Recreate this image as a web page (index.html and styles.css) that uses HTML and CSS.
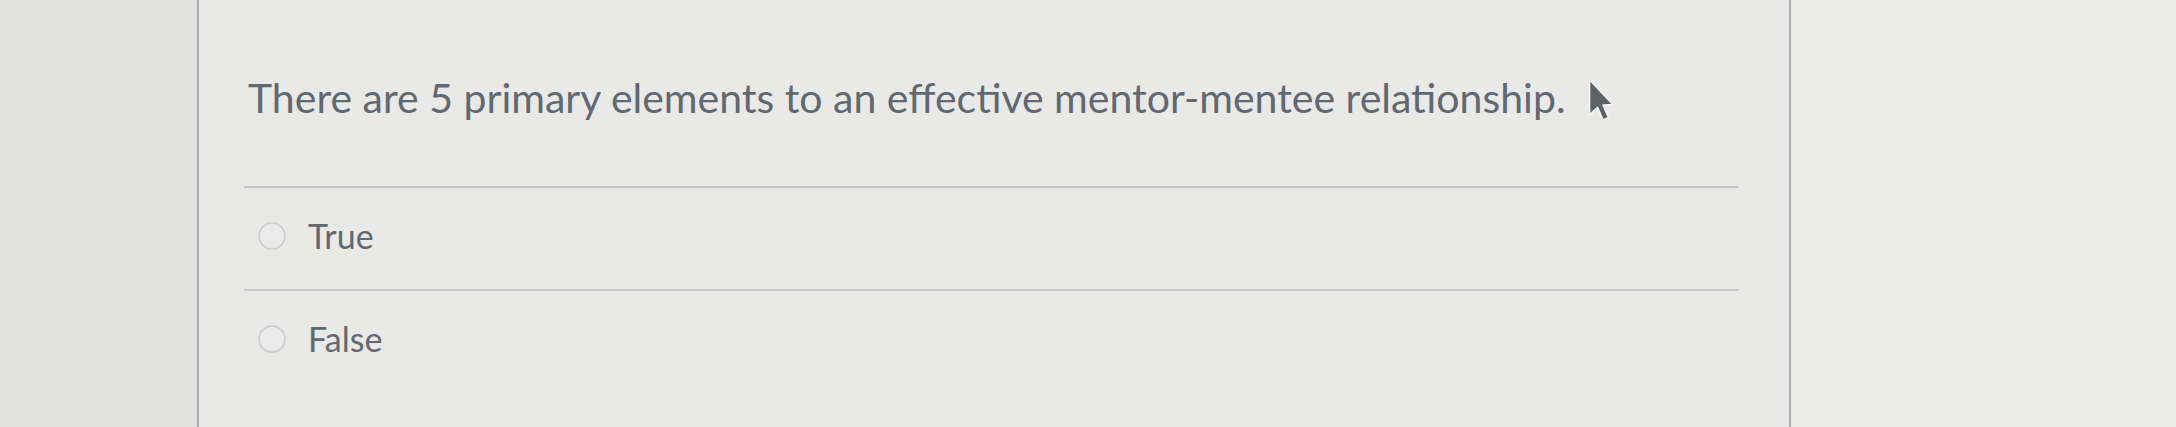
FILE: index.html
```html
<!DOCTYPE html>
<html lang="en">
<head>
  <meta charset="UTF-8">
  <meta name="viewport" content="width=device-width, initial-scale=1">
  <title>Quiz Question</title>
  <link rel="stylesheet" href="styles.css">
</head>
<body>
  <div class="sidebar"></div>

  <div class="main">
    <div class="question">
      <p class="question-text">There are 5 primary elements to an effective mentor-mentee relationship.<svg class="pointer" width="30" height="46" viewBox="0 0 26 40"><path d="M3 1.5 L3 32 L10 25.5 L14.8 36.5 L19.6 34.4 L14.8 23.6 L23.5 23.2 Z" fill="#5b6167" stroke="#f2f2f2" stroke-width="1.5" stroke-linejoin="round"/></svg></p>

      <div class="answers">
        <label class="answer">
          <input type="radio" name="answer" value="true">
          <span>True</span>
        </label>
        <label class="answer">
          <input type="radio" name="answer" value="false">
          <span>False</span>
        </label>
      </div>
    </div>
  </div>

  <div class="aside"></div>
</body>
</html>
```

FILE: styles.css
```css
body {
  margin: 0;
  height: 427px;
  display: flex;
  background: #e7e7e6;
  font-family: Lato, "Open Sans", sans-serif;
  color: #626870;
  overflow: hidden;
}

.sidebar {
  width: 197px;
  flex-shrink: 0;
  background: #e2e2e1;
}

.main {
  box-sizing: border-box;
  width: 1594px;
  flex-shrink: 0;
  padding-left: 45px;
  border-left: 2px solid #a9acb2;
  border-right: 2px solid #a9acb2;
  background: #e9e9e8;
}

.aside {
  flex: 1;
  background: #ebebea;
}

.question {
  width: 1495px;
}

.question-text {
  margin: 0 0 64px;
  padding: 73px 0 0 4px;
  font-size: 41px;
  line-height: 49px;
  height: 49px;
  white-space: nowrap;
}

.pointer {
  margin-left: 20px;
  vertical-align: -11px;
}

.answer {
  display: flex;
  align-items: center;
  border-top: 2px solid #c7c8ca;
  padding: 28px 0 33px 14px;
  font-size: 34px;
  line-height: 40px;
}

.answer input {
  appearance: none;
  box-sizing: border-box;
  width: 28px;
  height: 28px;
  margin: 0 22px 0 0;
  border: 2px solid #cfd0d1;
  border-radius: 50%;
  background: #ebebea;
}
```
